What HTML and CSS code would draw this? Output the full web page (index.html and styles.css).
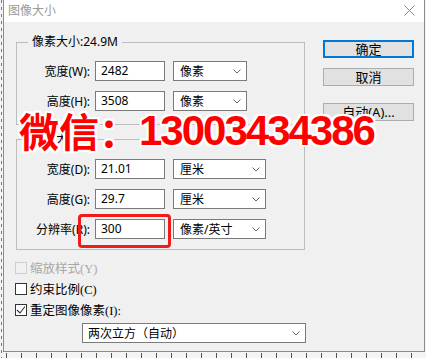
FILE: index.html
```html
<!DOCTYPE html>
<html lang="zh-CN">
<head>
    <meta charset="UTF-8">
    <meta name="viewport" content="width=device-width, initial-scale=1.0">
    <title>图像大小</title>
    <link rel="stylesheet" href="styles.css">
</head>
<body>
    <div class="dialog">
        <div class="titlebar">
            <span class="title">图像大小</span>
            <svg class="close" width="11" height="11" viewBox="0 0 11 11">
                <path d="M0.5 0.5 L10.5 10.5 M10.5 0.5 L0.5 10.5" stroke="#8a8a8a" stroke-width="1" fill="none"/>
            </svg>
        </div>

        <div class="dialog-body">
            <div class="main">
                <fieldset class="group group-pixels">
                    <legend>像素大小:24.9M</legend>
                    <div class="row">
                        <label>宽度(W):</label>
                        <div class="field">2482</div>
                        <div class="select select-short">像素<svg class="chevron" width="8" height="5" viewBox="0 0 8 5"><polyline points="0.5,0.5 4,4 7.5,0.5" fill="none" stroke="#666" stroke-width="1"/></svg></div>
                    </div>
                    <div class="row">
                        <label>高度(H):</label>
                        <div class="field">3508</div>
                        <div class="select select-short">像素<svg class="chevron" width="8" height="5" viewBox="0 0 8 5"><polyline points="0.5,0.5 4,4 7.5,0.5" fill="none" stroke="#666" stroke-width="1"/></svg></div>
                    </div>
                </fieldset>

                <fieldset class="group group-doc">
                    <legend>文档大小:</legend>
                    <div class="row">
                        <label>宽度(D):</label>
                        <div class="field">21.01</div>
                        <div class="select">厘米<svg class="chevron" width="8" height="5" viewBox="0 0 8 5"><polyline points="0.5,0.5 4,4 7.5,0.5" fill="none" stroke="#666" stroke-width="1"/></svg></div>
                    </div>
                    <div class="row">
                        <label>高度(G):</label>
                        <div class="field">29.7</div>
                        <div class="select">厘米<svg class="chevron" width="8" height="5" viewBox="0 0 8 5"><polyline points="0.5,0.5 4,4 7.5,0.5" fill="none" stroke="#666" stroke-width="1"/></svg></div>
                    </div>
                    <div class="row">
                        <label>分辨率(R):</label>
                        <div class="field">300</div>
                        <div class="select">像素/英寸<svg class="chevron" width="8" height="5" viewBox="0 0 8 5"><polyline points="0.5,0.5 4,4 7.5,0.5" fill="none" stroke="#666" stroke-width="1"/></svg></div>
                    </div>
                </fieldset>

                <div class="checks">
                    <div class="check disabled"><span class="box"></span>缩放样式(Y)</div>
                    <div class="check"><span class="box"></span>约束比例(C)</div>
                    <div class="check"><span class="box"><svg width="10" height="10" viewBox="0 0 10 10"><polyline points="1,5 4,8 9,1.5" fill="none" stroke="#333" stroke-width="1.1"/></svg></span>重定图像像素(I):</div>
                </div>

                <div class="select resample">两次立方（自动）<svg class="chevron" width="8" height="5" viewBox="0 0 8 5"><polyline points="0.5,0.5 4,4 7.5,0.5" fill="none" stroke="#666" stroke-width="1"/></svg></div>
            </div>

            <div class="buttons">
                <button class="default">确定</button>
                <button>取消</button>
                <button class="auto">自动(A)...</button>
            </div>
        </div>

        <!-- annotation overlays -->
        <div class="highlight"></div>
        <div class="watermark"><span class="wm-cn">微信：</span><span class="wm-num">13003434386</span></div>
    </div>
</body>
</html>
```

FILE: styles.css
```css
:root {
    --dialog-bg: #f0f0f0;
    --line: #bdbdbd;
    --field-border: #7a7a7a;
    --ui-font: "Noto Sans", "Noto Sans CJK SC", sans-serif;
}

html, body {
    margin: 0;
    width: 426px;
    height: 358px;
    overflow: hidden;
}

body {
    font-family: var(--ui-font);
    font-size: 12px;
    color: #000;
    background:
        repeating-linear-gradient(90deg, #555 0 1px, transparent 1px 15px) 6px 353px / 100% 5px no-repeat,
        repeating-linear-gradient(180deg, #777 0 3px, transparent 3px 7px) 1px 0 / 1px 100% no-repeat,
        #f4f4f4;
}

.dialog {
    position: relative;
    margin-left: 3px;
    width: 422px;
    height: 352px;
    box-sizing: border-box;
    border-left: 1px solid #8c8c8c;
    border-right: 1px solid #8c8c8c;
    border-bottom: 1px solid #8c8c8c;
    background: var(--dialog-bg);
    display: flex;
    flex-direction: column;
}

.titlebar {
    height: 22px;
    background: #fff;
    display: flex;
    align-items: center;
    justify-content: space-between;
    padding: 0 9px 0 4px;
}

.title {
    color: #9a9a9a;
    font-size: 12px;
    line-height: 16px;
    margin-top: -1px;
}

.close {
    display: block;
    margin-top: -2px;
}

.dialog-body {
    flex: 1;
    display: flex;
    padding: 12px 10px 0 12px;
    gap: 18px;
}

.main {
    width: 289px;
    display: flex;
    flex-direction: column;
}

.group {
    margin: 0;
    padding: 11px 0 13px 0;
    border: 1px solid var(--line);
    display: flex;
    flex-direction: column;
    gap: 10px;
}

.group legend {
    margin-left: 11px;
    padding: 0 4px;
    font-size: 12px;
    line-height: 16px;
}

.group-doc {
    margin-top: 6px;
    padding: 12px 0 10px 0;
}

.row {
    display: flex;
    align-items: center;
    height: 20px;
}

.row label {
    width: 73px;
    text-align: right;
    margin-right: 5px;
    white-space: nowrap;
}

.field {
    width: 70px;
    height: 20px;
    box-sizing: border-box;
    border: 1px solid var(--field-border);
    background: #fff;
    padding-left: 5px;
    line-height: 18px;
}

.select {
    width: 93px;
    height: 20px;
    box-sizing: border-box;
    margin-left: 8px;
    border: 1px solid var(--field-border);
    background: #fff;
    display: flex;
    align-items: center;
    justify-content: space-between;
    padding: 0 5px 0 6px;
    white-space: nowrap;
}

.select-short {
    width: 74px;
}

.chevron {
    display: block;
}

.checks {
    margin-top: 7px;
    display: flex;
    flex-direction: column;
}

.check {
    height: 21px;
    display: flex;
    align-items: center;
    margin-left: -1px;
    font-family: "Liberation Serif", "Noto Sans CJK SC", serif;
    font-size: 12.5px;
}

.check .box {
    width: 12px;
    height: 12px;
    box-sizing: border-box;
    border: 1px solid #333;
    background: #fff;
    margin-right: 3px;
    display: flex;
    align-items: center;
    justify-content: center;
}

.check.disabled {
    color: #a8a8a8;
}

.check.disabled .box {
    border-color: #cfcfcf;
    background: var(--dialog-bg);
}

.resample {
    margin-top: 3px;
    margin-left: 66px;
    width: 224px;
    padding-left: 5px;
}

.buttons {
    width: 91px;
    margin-top: 6px;
    display: flex;
    flex-direction: column;
}

button {
    height: 18px;
    box-sizing: border-box;
    border: 1px solid #adadad;
    background: #e1e1e1;
    font-family: var(--ui-font);
    font-size: 13px;
    line-height: 14px;
    padding: 0;
    color: #000;
    margin-bottom: 10px;
}

button.default {
    border: 2px solid #0078d7;
}

button.auto {
    margin-top: 7px;
}

.highlight {
    position: absolute;
    left: 74px;
    top: 214px;
    width: 93px;
    height: 34px;
    box-sizing: border-box;
    border: 3px solid #f21b1b;
    border-radius: 4px;
}

.watermark {
    position: absolute;
    left: 15px;
    top: 110px;
    line-height: 40px;
    color: #ff0000;
    font-weight: bold;
    white-space: nowrap;
    text-shadow:
        2px 0 0 #fff, -2px 0 0 #fff, 0 2px 0 #fff, 0 -2px 0 #fff,
        2px 2px 0 #fff, -2px -2px 0 #fff, 2px -2px 0 #fff, -2px 2px 0 #fff;
}

.wm-cn {
    font-family: "Noto Sans CJK SC", sans-serif;
    font-size: 40px;
}

.wm-num {
    font-family: "Liberation Sans", sans-serif;
    font-size: 42px;
    letter-spacing: -2px;
    vertical-align: 2px;
}
```
